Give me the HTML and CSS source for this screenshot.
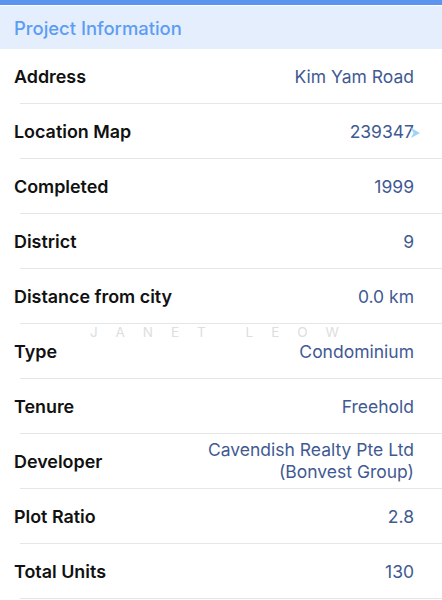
FILE: index.html
```html
<!DOCTYPE html>
<html lang="en">
<head>
    <meta charset="UTF-8">
    <meta name="viewport" content="width=device-width, initial-scale=1.0">
    <title>Project Information</title>
    <link rel="stylesheet" href="styles.css">
</head>
<body>

<div class="top-bar"></div>

<div class="section-header">Project Information</div>

<div class="info-list">
    <div class="row">
        <span class="label">Address</span>
        <span class="value">Kim Yam Road</span>
    </div>
    <div class="row">
        <span class="label">Location Map</span>
        <span class="value">239347<svg class="map-arrow" width="9" height="10" viewBox="0 0 9 10"><path d="M0 0 L9 5 L0 10 L2.5 5 Z" fill="#9fd3fa"/></svg></span>
    </div>
    <div class="row">
        <span class="label">Completed</span>
        <span class="value">1999</span>
    </div>
    <div class="row">
        <span class="label">District</span>
        <span class="value">9</span>
    </div>
    <div class="row">
        <span class="label">Distance from city</span>
        <span class="value">0.0 km</span>
    </div>
    <div class="row">
        <span class="label">Type</span>
        <span class="value">Condominium</span>
    </div>
    <div class="row">
        <span class="label">Tenure</span>
        <span class="value">Freehold</span>
    </div>
    <div class="row">
        <span class="label">Developer</span>
        <span class="value multi">Cavendish Realty Pte Ltd<br>(Bonvest Group)</span>
    </div>
    <div class="row">
        <span class="label">Plot Ratio</span>
        <span class="value">2.8</span>
    </div>
    <div class="row">
        <span class="label">Total Units</span>
        <span class="value">130</span>
    </div>

    <div class="watermark">JANET&nbsp;LEOW</div>
</div>

</body>
</html>
```

FILE: styles.css
```css
body {
    margin: 0;
    font-family: Inter, "Noto Sans", sans-serif;
    background-color: #fff;
}

.top-bar {
    height: 5px;
    background-color: #5b95f0;
    border-bottom: 1px solid #fff;
}

.section-header {
    height: 43px;
    line-height: 44px;
    padding-left: 14px;
    background-color: #e4eefc;
    color: #5d9cf5;
    font-size: 18.4px;
    font-weight: 500;
}

.info-list {
    position: relative;
}

.row {
    display: flex;
    align-items: center;
    justify-content: space-between;
    height: 54px;
    margin-left: 20px;
    padding-right: 28px;
    border-bottom: 1px solid #e6e6e6;
}

.label {
    margin-left: -6px;
    font-size: 17.9px;
    font-weight: 600;
    color: #111;
}

.value {
    font-size: 17.5px;
    color: #3f5a92;
    text-align: right;
    white-space: nowrap;
}

.value.multi {
    line-height: 22px;
}

.map-arrow {
    margin-left: -3px;
    margin-right: -6px;
    vertical-align: 0px;
}

.watermark {
    position: absolute;
    top: 275px;
    left: 90px;
    font-size: 13.5px;
    letter-spacing: 18px;
    color: #dedede;
    pointer-events: none;
}
```
